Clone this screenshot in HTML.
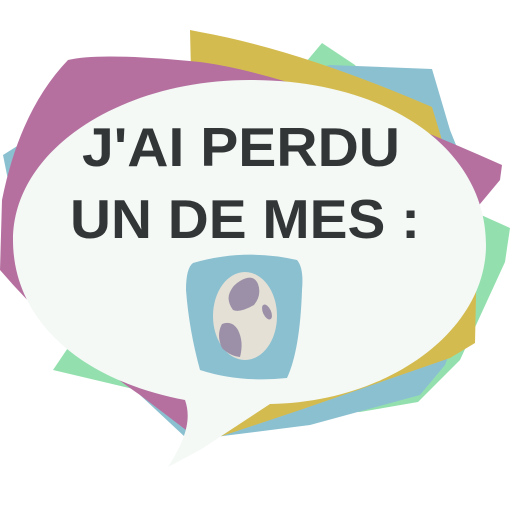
<!DOCTYPE html>
<html><head><style>
html,body{margin:0;padding:0;background:#fff;width:512px;height:512px;overflow:hidden}
</style></head><body>
<svg width="512" height="512" viewBox="0 0 512 512" xmlns="http://www.w3.org/2000/svg">
<polygon fill="#93e0ae" points="322,43 355,65 470,210 510,228 505,262 460,360 418,402 360,412 180,400 53,370 80,330"/>
<polygon fill="#8bc0d0" points="3,155 30,138 330,65 432,69 450,130 478,200 470,300 445,365 420,395 310,425 215,437 185,437 140,395 10,190"/>
<path fill="#d4bb50" d="M190,30 L200,32 Q300,50 432,107 L445,150 L477,250 L475,343 L450,358 L300,410 L222,436 L200,440 Z"/>
<path fill="#b570a0" d="M68,60 Q100,52 200,62 Q300,75 502,165 L500,180 L475,210 L420,250 L190,420 L186,430 L140,395 Q60,340 0,270 L2,200 Q20,110 68,60 Z"/>
<path fill="#f4f9f6" d="M250,80 C390,80 486,150 486,245 C486,330 390,402 270,404 L200,450 L168,467 C185,440 192,420 185,400 C80,380 13,320 13,240 C13,150 120,80 250,80 Z"/>
<path fill="#8bc0d0" d="M193,263 Q245,248 297,260 Q304,268 302,290 Q300,350 287,378 Q240,383 200,370 Q189,330 186,290 Q186,268 193,263 Z"/>
<ellipse cx="245" cy="316" rx="32" ry="44" fill="#e4e0d6"/>
<path fill="#9b90a8" d="M240,281 Q253,273 258,284 Q262,295 254,305 Q240,313 233,310 Q226,300 230,292 Q233,285 240,281 Z"/>
<path fill="#9b90a8" d="M222,324 Q232,320 238,330 Q244,342 240,357 Q230,356 222,348 Q216,335 222,324 Z"/>
<ellipse cx="267" cy="312" rx="4" ry="8" transform="rotate(-25 267 312)" fill="#9b90a8"/>
<g font-family="'Liberation Sans',sans-serif" font-weight="bold" fill="#333637" text-anchor="middle" font-size="55">
<text x="241" y="166" textLength="318" lengthAdjust="spacingAndGlyphs">J'AI PERDU</text>
<text x="245" y="238" textLength="350" lengthAdjust="spacingAndGlyphs">UN DE MES :</text>
</g>
</svg>
</body></html>
